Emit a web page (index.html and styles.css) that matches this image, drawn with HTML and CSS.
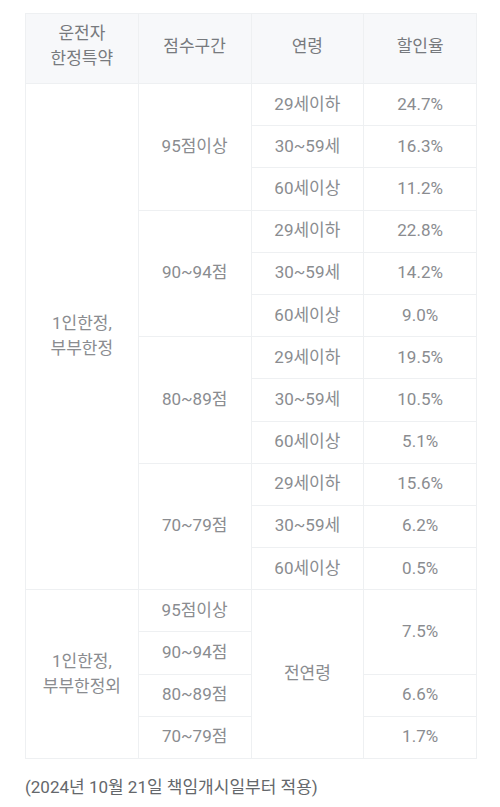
FILE: index.html
```html
<!DOCTYPE html>
<html lang="ko">
<head>
<meta charset="utf-8">
<link rel="stylesheet" href="styles.css">
</head>
<body>
<div class="wrap">
  <table class="rate">
    <thead>
      <tr class="head-row">
        <th>운전자<br>한정특약</th>
        <th>점수구간</th>
        <th>연령</th>
        <th>할인율</th>
      </tr>
    </thead>
    <tbody>
      <tr><td rowspan="12">1인한정,<br>부부한정</td><td rowspan="3">95점이상</td><td>29세이하</td><td>24.7%</td></tr>
      <tr><td>30~59세</td><td>16.3%</td></tr>
      <tr><td>60세이상</td><td>11.2%</td></tr>
      <tr><td rowspan="3">90~94점</td><td>29세이하</td><td>22.8%</td></tr>
      <tr><td>30~59세</td><td>14.2%</td></tr>
      <tr><td>60세이상</td><td>9.0%</td></tr>
      <tr><td rowspan="3">80~89점</td><td>29세이하</td><td>19.5%</td></tr>
      <tr><td>30~59세</td><td>10.5%</td></tr>
      <tr><td>60세이상</td><td>5.1%</td></tr>
      <tr><td rowspan="3">70~79점</td><td>29세이하</td><td>15.6%</td></tr>
      <tr><td>30~59세</td><td>6.2%</td></tr>
      <tr><td>60세이상</td><td>0.5%</td></tr>
      <tr><td rowspan="4">1인한정,<br>부부한정외</td><td>95점이상</td><td rowspan="4">전연령</td><td rowspan="2">7.5%</td></tr>
      <tr><td>90~94점</td></tr>
      <tr><td>80~89점</td><td>6.6%</td></tr>
      <tr><td>70~79점</td><td>1.7%</td></tr>
    </tbody>
  </table>
  <p class="note">(2024년 10월 21일 책임개시일부터 적용)</p>
</div>
</body>
</html>
```

FILE: styles.css
```css
html, body {
  margin: 0;
  padding: 0;
  background: #ffffff;
}
body {
  font-family: Roboto, "Noto Sans CJK KR", "Noto Sans", sans-serif;
  color: #8a8c90;
}
.wrap {
  padding: 13px 23px 0 25px;
}
.rate {
  width: 452px;
  border-collapse: collapse;
  table-layout: fixed;
  font-size: 17px;
  line-height: 25px;
}
.rate th,
.rate td {
  border: 1px solid #eef0f2;
  text-align: center;
  vertical-align: middle;
  padding: 0 0 1px 0;
  font-weight: 400;
}
.rate th {
  background: #f7f8fa;
  color: #777a7e;
  padding-bottom: 5px;
}
.head-row {
  height: 70px;
}
.rate tbody tr {
  height: 42.2px;
}
.note {
  margin: 16px 0 0 0;
  font-size: 17px;
  line-height: 25px;
  color: #64676b;
}
```
